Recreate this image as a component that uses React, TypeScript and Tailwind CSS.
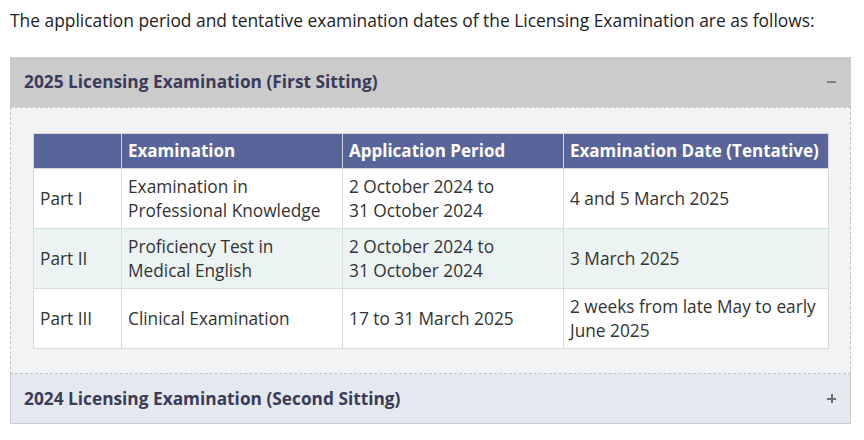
import React from "react";

const rows = [
  { part: "Part I", exam: ["Examination in", "Professional Knowledge"], app: ["2 October 2024 to", "31 October 2024"], date: ["4 and 5 March 2025"], bg: "bg-white" },
  { part: "Part II", exam: ["Proficiency Test in", "Medical English"], app: ["2 October 2024 to", "31 October 2024"], date: ["3 March 2025"], bg: "bg-[#ebf3f3]" },
  { part: "Part III", exam: ["Clinical Examination"], app: ["17 to 31 March 2025"], date: ["2 weeks from late May to early", "June 2025"], bg: "bg-white" },
];

function Lines({ items }: { items: string[] }) {
  return (
    <>
      {items.map((t, i) => (
        <div key={i}>{t}</div>
      ))}
    </>
  );
}

export default function App() {
  return (
    <div
      className="w-[864px] h-[440px] bg-white overflow-hidden text-[#333333]"
      style={{ fontFamily: '"Segoe UI", "Open Sans", "Noto Sans", sans-serif' }}
    >
      <p className="pl-[10px] pt-[8px] text-[17.4px] leading-[24px] text-[#222222]">
        The application period and tentative examination dates of the Licensing Examination are as follows:
      </p>

      <div className="ml-[10px] mt-[25px] w-[841px]">
        <div className="h-[50px] bg-[#cbcbcb] flex items-center justify-between pl-[14px] pr-[14px]">
          <span className="text-[17.3px] font-bold text-[#3b3b5a]">2025 Licensing Examination (First Sitting)</span>
          <span className="block w-[9px] h-[1.5px] bg-[#808080] mr-[1px]" />
        </div>
        <div className="border border-dashed border-[#c4c4c4] bg-[#f1f3f4] px-[22px] pt-[25px] pb-[24px]">
          <table className="w-[795px] border-collapse table-fixed text-[17.3px] leading-[24px]">
            <colgroup>
              <col className="w-[88px]" />
              <col className="w-[221px]" />
              <col className="w-[221px]" />
              <col className="w-[265px]" />
            </colgroup>
            <thead>
              <tr className="bg-[#58659a] text-white h-[35px] text-[17px]">
                <th className="border border-[#d4d8dc] px-[6px] text-left font-bold"></th>
                <th className="border border-[#d4d8dc] px-[6px] text-left font-bold">Examination</th>
                <th className="border border-[#d4d8dc] px-[6px] text-left font-bold">Application Period</th>
                <th className="border border-[#d4d8dc] px-[6px] text-left font-bold">Examination Date (Tentative)</th>
              </tr>
            </thead>
            <tbody>
              {rows.map((r) => (
                <tr key={r.part} className={`${r.bg} h-[60px]`}>
                  <td className="border border-[#d9dcdf] px-[6px] align-middle">{r.part}</td>
                  <td className="border border-[#d9dcdf] px-[6px] align-middle"><Lines items={r.exam} /></td>
                  <td className="border border-[#d9dcdf] px-[6px] align-middle"><Lines items={r.app} /></td>
                  <td className="border border-[#d9dcdf] px-[6px] align-middle"><Lines items={r.date} /></td>
                </tr>
              ))}
            </tbody>
          </table>
        </div>
        <div className="h-[50px] bg-[#e3e9ee] border border-t-0 border-[#c9cdd1] flex items-center justify-between pl-[13px] pr-[13px]">
          <span className="text-[17.3px] font-bold text-[#3b3b5a]">2024 Licensing Examination (Second Sitting)</span>
          <span className="relative block w-[9px] h-[9px] mr-[1px]">
            <span className="absolute left-0 top-[4px] w-[9px] h-[1.5px] bg-[#707070]" />
            <span className="absolute left-[4px] top-0 w-[1.5px] h-[9px] bg-[#707070]" />
          </span>
        </div>
      </div>
    </div>
  );
}
